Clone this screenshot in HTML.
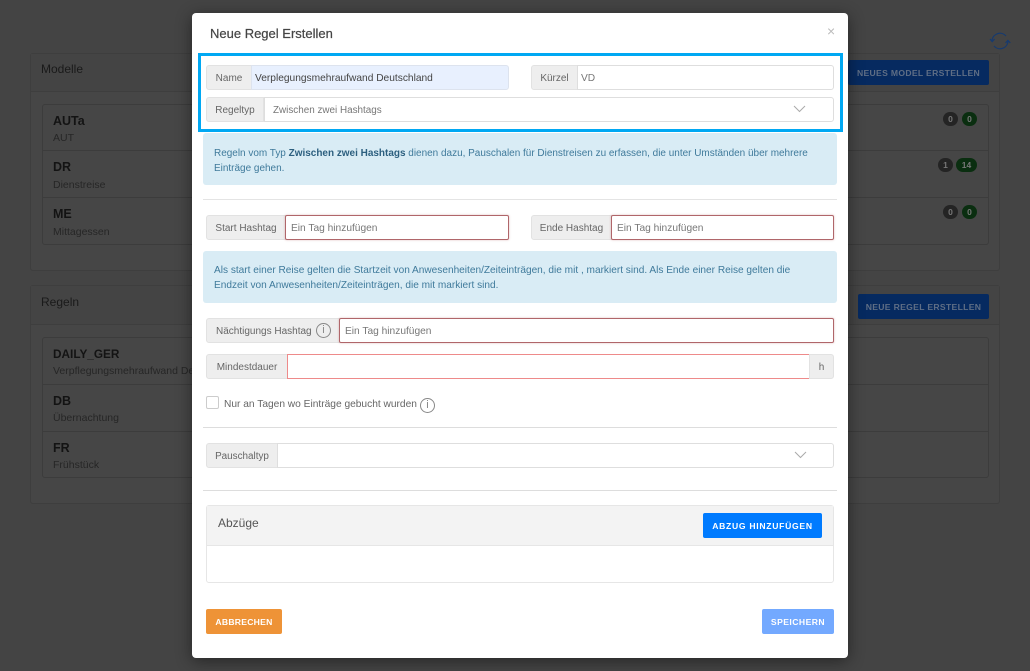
<!DOCTYPE html>
<html lang="de"><head><meta charset="utf-8"><title>Neue Regel Erstellen</title>
<style>
html,body{margin:0;padding:0;width:1030px;height:671px;overflow:hidden;background:#444}
#r{position:relative;width:1030px;height:671px;overflow:hidden;background:#444;font-family:"Liberation Sans",sans-serif;font-size:11px;color:#495057}
#r div,#r span.a,#r svg.a{position:absolute;box-sizing:border-box;white-space:nowrap}
.card{background:#464646;border:1px solid #3e3e3e;border-radius:3px}
.hd{background:#444;border-bottom:1px solid #3e3e3e}
.list{border:1px solid #3c3c3c;border-radius:3px;background:#464646}
.sep{height:1px;background:#3c3c3c}
.t{font-size:12.5px;font-weight:bold;color:#131313}
.s{font-size:10.5px;color:#262626}
.bgb{background:#062a60;border-radius:2px;color:#5f6e85;font-weight:bold;font-size:8.6px;letter-spacing:.32px;text-align:center}
.bdg{height:14px;border-radius:7px;color:#777;font-size:8.5px;font-weight:bold;text-align:center;line-height:14px}
.k{background:#242424}.g{background:#0a2e10}
#m{left:192px;top:13px;width:656px;height:645px;background:#fff;border-radius:4px;box-shadow:0 3px 16px rgba(0,0,0,.45)}
.ad{background:#eee;border:1px solid #e2e2e2;border-radius:3px 0 0 3px;color:#666;font-size:10px;line-height:25px;text-align:center}
.in{background:#fff;border:1px solid #dedede;border-radius:0 3px 3px 0;color:#777;font-size:10.2px;line-height:25px;padding-left:5px}
.rd{border:1px solid #b0666a;border-radius:2px;box-shadow:0 0 2px rgba(170,70,70,.35)}
.al{background:#d9ecf5;border-radius:3px;color:#3f7a9b;font-size:10.1px;line-height:15px;padding:11.5px 11px}
.hr{height:1px;background:#e4e4e4}
.btn{border-radius:2px;color:#fff;font-weight:bold;font-size:8.6px;letter-spacing:.7px;text-align:center;line-height:25px}
.i{border:1px solid #888;border-radius:50%;width:15px;height:15px;color:#888;text-align:center;font-size:11px;line-height:13px}
</style></head><body><div id="r">

<div class="card" style="left:30px;top:53px;width:970px;height:218px"></div>
<div class="hd" style="left:31px;top:54px;width:968px;height:38px"></div>
<div style="left:41px;top:62px;font-size:12px;color:#1a1a1a">Modelle</div>
<div class="bgb" style="left:848px;top:60px;width:141px;height:25px;line-height:27px">NEUES MODEL ERSTELLEN</div>
<div class="list" style="left:42px;top:104px;width:947px;height:141px"></div>
<div class="sep" style="left:43px;top:150px;width:945px"></div>
<div class="sep" style="left:43px;top:197px;width:945px"></div>
<div class="t" style="left:53px;top:114px">AUTa</div><div class="s" style="left:53px;top:132px">AUT</div>
<div class="t" style="left:53px;top:160px">DR</div><div class="s" style="left:53px;top:179px">Dienstreise</div>
<div class="t" style="left:53px;top:207px">ME</div><div class="s" style="left:53px;top:226px">Mittagessen</div>
<div class="bdg k" style="left:943px;top:112px;width:15px">0</div><div class="bdg g" style="left:962px;top:112px;width:15px">0</div>
<div class="bdg k" style="left:938px;top:158px;width:15px">1</div><div class="bdg g" style="left:956px;top:158px;width:21px">14</div>
<div class="bdg k" style="left:943px;top:205px;width:15px">0</div><div class="bdg g" style="left:962px;top:205px;width:15px">0</div>

<div class="card" style="left:30px;top:285px;width:970px;height:219px"></div>
<div class="hd" style="left:31px;top:286px;width:968px;height:39px"></div>
<div style="left:41px;top:295px;font-size:12px;color:#1a1a1a">Regeln</div>
<div class="bgb" style="left:858px;top:294px;width:131px;height:25px;line-height:26px">NEUE REGEL ERSTELLEN</div>
<div class="list" style="left:42px;top:337px;width:947px;height:141px"></div>
<div class="sep" style="left:43px;top:384px;width:945px"></div>
<div class="sep" style="left:43px;top:431px;width:945px"></div>
<div class="t" style="left:53px;top:347px;font-size:11.8px">DAILY_GER</div><div class="s" style="left:53px;top:365px">Verpflegungsmehraufwand Deutschland</div>
<div class="t" style="left:53px;top:394px">DB</div><div class="s" style="left:53px;top:412px">Übernachtung</div>
<div class="t" style="left:53px;top:441px">FR</div><div class="s" style="left:53px;top:459px">Frühstück</div>

<svg class="a" style="left:989px;top:30px" width="22" height="22" viewBox="0 0 22 22" fill="none" stroke="#153a70" stroke-width="1.2"><path d="M3 10.5A8 8 0 0 1 17 6M19 11.5A8 8 0 0 1 5 16"/><path d="M1 9l2.2 2.6L5.6 9M16.500 13l2.400-2.600L21.300 13"/></svg>

<div id="m"></div>
<div style="left:210px;top:26px;font-size:13px;color:#444;-webkit-text-stroke:.2px #444">Neue Regel Erstellen</div>
<div style="left:827px;top:23px;font-size:14px;color:#bbb">×</div>

<div style="left:198px;top:53px;width:645px;height:79px;border:3px solid #00a8f3"></div>

<div class="ad" style="left:206px;top:65px;width:46px;height:25px">Name</div>
<div class="in" style="left:251px;top:65px;width:258px;height:25px;background:#e8f0fe;border-color:#dde3ee;color:#444;padding-left:3px">Verplegungsmehraufwand Deutschland</div>
<div class="ad" style="left:531px;top:65px;width:47px;height:25px">Kürzel</div>
<div class="in" style="left:577px;top:65px;width:257px;height:25px;padding-left:3px">VD</div>
<div class="ad" style="left:206px;top:97px;width:58px;height:25px">Regeltyp</div>
<div class="in" style="left:264px;top:97px;width:570px;height:25px;padding-left:8px;font-size:9.9px">Zwischen zwei Hashtags</div>
<svg class="a" style="left:793px;top:105px" width="13" height="8" fill="none" stroke="#aaa"><path d="M1 1l5.500 5.500L12 1"/></svg>

<div class="al" style="left:203px;top:133px;width:634px;height:52px;padding-top:12.5px;font-size:9.97px">Regeln vom Typ <b style="color:#2c5f7f">Zwischen zwei Hashtags</b> dienen dazu, Pauschalen für Dienstreisen zu erfassen, die unter Umständen über mehrere<br>Einträge gehen.</div>
<div class="hr" style="left:203px;top:199px;width:634px"></div>

<div class="ad" style="left:206px;top:215px;width:80px;height:25px">Start Hashtag</div>
<div class="in rd" style="left:285px;top:215px;width:224px;height:25px">Ein Tag hinzufügen</div>
<div class="ad" style="left:531px;top:215px;width:81px;height:25px">Ende Hashtag</div>
<div class="in rd" style="left:611px;top:215px;width:223px;height:25px">Ein Tag hinzufügen</div>

<div class="al" style="left:203px;top:251px;width:634px;height:52px">Als start einer Reise gelten die Startzeit von Anwesenheiten/Zeiteinträgen, die mit , markiert sind. Als Ende einer Reise gelten die<br>Endzeit von Anwesenheiten/Zeiteinträgen, die mit markiert sind.</div>

<div class="ad" style="left:206px;top:318px;width:134px;height:25px;text-align:left;padding-left:9px">Nächtigungs Hashtag</div>
<div class="i" style="left:316px;top:323px">i</div>
<div class="in rd" style="left:339px;top:318px;width:495px;height:25px">Ein Tag hinzufügen</div>
<div class="ad" style="left:206px;top:354px;width:82px;height:25px">Mindestdauer</div>
<div style="left:287px;top:354px;width:523px;height:25px;border:1px solid #ee8a8a"></div>
<div class="ad" style="left:809px;top:354px;width:25px;height:25px;border-radius:0 3px 3px 0">h</div>

<div style="left:206px;top:396px;width:13px;height:13px;border:1px solid #ccc;border-radius:2px"></div>
<div style="left:224px;top:398px;font-size:10.2px;line-height:14px;color:#666">Nur an Tagen wo Einträge gebucht wurden</div>
<div class="i" style="left:420px;top:398px">i</div>
<div class="hr" style="left:203px;top:427px;width:634px;background:#ddd"></div>

<div class="ad" style="left:206px;top:443px;width:72px;height:25px;font-size:9.9px">Pauschaltyp</div>
<div class="in" style="left:277px;top:443px;width:557px;height:25px"></div>
<svg class="a" style="left:794px;top:451px" width="13" height="8" fill="none" stroke="#aaa"><path d="M1 1l5.500 5.500L12 1"/></svg>
<div class="hr" style="left:203px;top:490px;width:634px;background:#ddd"></div>

<div style="left:206px;top:505px;width:628px;height:78px;border:1px solid #e6e6e6;border-radius:3px"></div>
<div style="left:207px;top:506px;width:626px;height:40px;background:#f3f3f3;border-bottom:1px solid #e6e6e6"></div>
<div style="left:218px;top:516px;font-size:12px;color:#555">Abzüge</div>
<div class="btn" style="left:703px;top:513px;width:119px;height:25px;background:#007bff;line-height:26px">ABZUG HINZUFÜGEN</div>

<div class="btn" style="left:206px;top:609px;width:76px;height:25px;background:#ee9337;line-height:26px;letter-spacing:.25px">ABBRECHEN</div>
<div class="btn" style="left:762px;top:609px;width:72px;height:25px;background:#73a9ff;line-height:26px;letter-spacing:.45px">SPEICHERN</div>
</div></body></html>
